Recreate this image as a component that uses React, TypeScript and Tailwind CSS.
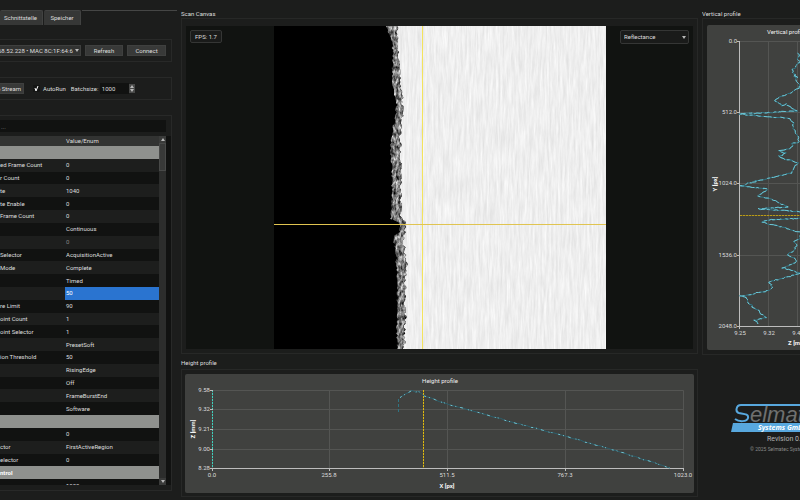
type Point = [number, number];

type Row = {
  label?: string;
  value?: string;
  kind?: "group" | "selected" | "muted";
};

const rows: Row[] = [
  { kind: "group" },
  { label: "ed Frame Count", value: "0" },
  { label: "r Count", value: "0" },
  { label: "te", value: "1040" },
  { label: "te Enable", value: "0" },
  { label: "Frame Count", value: "0" },
  { value: "Continuous" },
  { value: "0", kind: "muted" },
  { label: "Selector", value: "AcquisitionActive" },
  { label: "Mode", value: "Complete" },
  { value: "Timed" },
  { value: "50", kind: "selected" },
  { label: "re Limit", value: "90" },
  { label: "oint Count", value: "1" },
  { label: "oint Selector", value: "1" },
  { value: "PresetSoft" },
  { label: "ion Threshold", value: "50" },
  { value: "RisingEdge" },
  { value: "Off" },
  { value: "FrameBurstEnd" },
  { value: "Software" },
  { kind: "group" },
  { value: "0" },
  { label: "ctor", value: "FirstActiveRegion" },
  { label: "elector", value: "0" },
  { label: "ntrol", kind: "group" },
  { value: "1000" },
];

// small seeded generator, keeps the traces identical between renders
function random(seed: number) {
  let s = seed;
  return () => {
    s = (s * 16807) % 2147483647;
    return s / 2147483647;
  };
}

function roughen(points: Point[], step: number, dx: number, dy: number, seed: number): Point[] {
  const rnd = random(seed);
  const out: Point[] = [];
  for (let i = 0; i < points.length - 1; i++) {
    const [x0, y0] = points[i];
    const [x1, y1] = points[i + 1];
    const n = Math.max(1, Math.round(Math.hypot(x1 - x0, y1 - y0) / step));
    for (let k = 0; k < n; k++) {
      const t = k / n;
      out.push([
        x0 + (x1 - x0) * t + (rnd() - 0.5) * dx,
        y0 + (y1 - y0) * t + (rnd() - 0.5) * dy,
      ]);
    }
  }
  out.push(points[points.length - 1]);
  return out;
}

const toPoints = (points: Point[]) =>
  points.map(([x, y]) => `${x.toFixed(1)},${y.toFixed(1)}`).join(" ");

const edgeLeft: Point[] = [
  [113, 0], [114, 6], [118, 16], [119, 34], [118, 54], [120, 69], [123, 79], [121, 92],
  [118, 109], [117, 124], [118, 154], [117, 193], [123, 196], [127, 200], [126, 206],
  [119, 211], [122, 224], [123, 254], [123, 294], [123, 323],
];

const edgeRight: Point[] = [
  [130, 323], [131, 290], [131, 274], [132, 239], [131, 225], [129, 214], [131, 206],
  [131, 197], [127, 190], [127, 154], [126, 110], [128, 90], [128, 74], [125, 34], [123, 0],
];

const verticalTrace: Point[] = [
  [92, 28], [91, 34], [93, 37], [85, 46], [91, 53], [87, 49], [93, 62], [83, 68],
  [70, 73], [69, 76], [75, 81], [78, 79], [90, 86], [33, 89], [60, 92], [81, 93],
  [87, 98], [85, 102], [89, 107], [92, 113], [91, 117], [86, 119], [83, 124],
  [73, 126], [78, 128], [71, 132], [83, 135], [92, 138], [86, 143], [84, 148],
  [75, 150], [63, 153], [46, 157], [34, 161], [50, 163], [61, 164], [51, 171],
  [65, 174], [73, 178], [80, 182], [51, 184], [100, 187],
];

const verticalTraceLower: Point[] = [
  [100, 193], [61, 195], [53, 197], [71, 201], [78, 203], [93, 207], [93, 213],
  [86, 217], [90, 221], [82, 230], [85, 232], [90, 237], [76, 243], [94, 248],
  [73, 254], [61, 257], [66, 262], [60, 266], [34, 271], [40, 273], [41, 278],
  [48, 283], [59, 293], [48, 295], [51, 299],
];

const heightTrace: Point[] = [
  [215, 24], [222, 19], [227, 17], [234, 18], [239, 22], [262, 30], [331, 49],
  [380, 62], [435, 78], [485, 94],
];

function Triangle({ up = false, className = "" }: { up?: boolean; className?: string }) {
  return (
    <svg viewBox="0 0 4 3" className={`h-[3px] w-1 fill-[#b8b8b8] ${className}`}>
      <path d={up ? "M0 3H4L2 0Z" : "M0 0H4L2 3Z"} />
    </svg>
  );
}

function ScanImage() {
  const left = roughen(edgeLeft, 2, 2, 0, 7);
  const right = roughen(edgeRight, 2, 3, 0, 19);
  return (
    <svg viewBox="0 0 332 323" preserveAspectRatio="none" className="mr-[87px] ml-[88px] h-full min-w-0 flex-1 bg-black">
      <defs>
        <filter id="grain" x="0" y="0" width="100%" height="100%" colorInterpolationFilters="sRGB">
          <feTurbulence type="fractalNoise" baseFrequency="0.45 0.04" numOctaves="4" seed="4" />
          <feColorMatrix values="0.13 0 0 0 0.87  0.13 0 0 0 0.87  0.13 0 0 0 0.87  0 0 0 0 1" />
          <feComposite in2="SourceGraphic" operator="in" />
        </filter>
        <filter id="rough" x="0" y="0" width="100%" height="100%" colorInterpolationFilters="sRGB">
          <feTurbulence type="fractalNoise" baseFrequency="0.4 0.2" numOctaves="3" seed="9" />
          <feColorMatrix values="1.3 0 0 0 -0.16  1.3 0 0 0 -0.16  1.3 0 0 0 -0.16  0 0 0 0 1" />
          <feComposite in2="SourceGraphic" operator="in" />
        </filter>
      </defs>
      <polygon points={`${toPoints(right)} 332,0 332,323`} fill="#f1f1f1" filter="url(#grain)" />
      <polygon points={toPoints([...left, ...right])} fill="#777777" filter="url(#rough)" />
      <path d="M148.500 0V323" stroke="#f3e35c" />
      <path d="M0 198.500H332" stroke="#e0c450" />
    </svg>
  );
}

function HeightChart() {
  const xs = [27, 144, 262, 380, 498];
  const ys = [16, 35, 55, 75, 94];
  const xLabels = ["0.0", "255.8", "511.5", "767.3", "1023.0"];
  const yLabels = ["9.58", "9.32", "9.21", "9.00", "8.28"];
  const trace = toPoints(roughen(heightTrace, 4, 0, 1, 31));
  return (
    <svg viewBox="0 0 509 119" className="w-full rounded-xs bg-[#40413f] text-[6px]">
      <g transform="translate(0.5 0.5)" stroke="#545553">
        {xs.map((x) => <path key={x} d={`M${x} 16V94`} />)}
        {ys.map((y) => <path key={y} d={`M27 ${y}H498`} />)}
      </g>
      <path d="M27 94.500H499" stroke="#bdbdbd" />
      <path d="M27.500 16V94" stroke="#3fd0bd" strokeDasharray="2 1" />
      <path d="M238.500 16V94" stroke="#6e611c" />
      <path d="M238.500 16V94" stroke="#dcb814" strokeDasharray="2 1" />
      <g fill="#dcdcdc">
        <text x="255" y="9" textAnchor="middle" fill="#f0f0f0">Height profile</text>
        {xs.map((x, i) => (
          <g key={x}>
            <path d={`M${x}.5 94v3`} stroke="#bdbdbd" />
            <text x={x} y="103" textAnchor="middle">{xLabels[i]}</text>
          </g>
        ))}
        {ys.map((y, i) => (
          <g key={y}>
            <path d={`M25 ${y}.5h3`} stroke="#bdbdbd" />
            <text x="25" y={y + 2} textAnchor="end">{yLabels[i]}</text>
          </g>
        ))}
        <text x="262" y="114" textAnchor="middle" fontWeight="700" fill="#f4f4f4">X [px]</text>
        <text transform="translate(10 55) rotate(-90)" textAnchor="middle" fontWeight="700" fill="#f4f4f4">Z [mm]</text>
      </g>
      <g fill="none">
        <path d="M213.500 25V40" stroke="#2f7482" strokeDasharray="3 2" />
        <polyline points={trace} stroke="#2c5f6c" />
        <polyline points={trace} stroke="#74c3cf" strokeDasharray="2 3 1 4 3 5 1 2 1 6" />
      </g>
    </svg>
  );
}

function VerticalChart() {
  const ys = [16, 87, 158, 230, 301];
  const yLabels = ["0.0", "512.0", "1024.0", "1536.0", "2048.0"];
  const traces = [
    toPoints(roughen(verticalTrace, 2, 3, 1, 5)),
    toPoints(roughen(verticalTraceLower, 2, 3, 1, 11)),
  ];
  return (
    <svg viewBox="0 0 180 325" className="w-[180px] shrink-0 rounded-xs bg-[#40413f] text-[6px]">
      <g transform="translate(0.5 0.5)" stroke="#545553">
        {[61, 90, 119, 148].map((x) => <path key={x} d={`M${x} 16V301`} />)}
        {ys.map((y) => <path key={y} d={`M32 ${y}H180`} />)}
      </g>
      <path d="M32.500 16V304M32 301.500H180" stroke="#bdbdbd" fill="none" />
      <path d="M33 190.500H180" stroke="#6e611c" />
      <path d="M33 190.500H180" stroke="#b89a1c" strokeDasharray="2 1" />
      <g fill="#dcdcdc">
        <text x="60" y="9" fill="#f0f0f0">Vertical profile</text>
        {ys.map((y, i) => (
          <g key={y}>
            <path d={`M30 ${y}.5h3`} stroke="#bdbdbd" />
            <text x="30" y={y + 2} textAnchor="end">{yLabels[i]}</text>
          </g>
        ))}
        <text x="33" y="310" textAnchor="middle">9.25</text>
        <text x="62" y="310" textAnchor="middle">9.32</text>
        <text x="91" y="310" textAnchor="middle">9.40</text>
        <text x="81" y="320" fontWeight="700" fill="#f4f4f4">Z [mm]</text>
        <text transform="translate(10 159) rotate(-90)" textAnchor="middle" fontWeight="700" fill="#f4f4f4">Y [px]</text>
      </g>
      {traces.map((trace) => (
        <g key={trace} fill="none">
          <polyline points={trace} stroke="#2f7788" />
          <polyline points={trace} stroke="#6fc6d4" strokeDasharray="5 3 8 2 3 4" />
        </g>
      ))}
    </svg>
  );
}

function Logo() {
  return (
    <svg viewBox="0 0 140 30" className="h-[30px] w-[140px] shrink-0" fontStyle="italic">
      <path
        d="M140 2H10C5 2 4 9 8 10C13 11 18 11 17 15C16 19 8 19 4 16"
        fill="none"
        stroke="#58a8de"
        strokeWidth="2"
      />
      <text x="19" y="19" fontSize="22" fontFamily="Liberation Sans, sans-serif" fill="#6f706f">elmatec</text>
      <path d="M2 20H140V29H0Z" fill="#58a8de" />
      <text x="27" y="27" fontSize="7" fontWeight="700" fontFamily="Noto Sans, sans-serif" fill="#ffffff">Systems GmbH</text>
    </svg>
  );
}

function ParameterTable() {
  return (
    <div className="mt-1 flex h-[349px] overflow-hidden bg-[#111211]">
      <table className="h-[356px] w-[159px] table-fixed border-collapse text-left leading-[8px]">
        <thead>
          <tr className="h-[10px] bg-[#323332]">
            <th className="w-[65px] p-0" aria-label="Feature" />
            <th className="p-0 pl-px font-normal">Value/Enum</th>
          </tr>
        </thead>
        <tbody>
          {rows.map((row, i) => {
            const group = row.kind === "group";
            const stripe = i % 2 ? "h-[12px] bg-[#1d1e1d]" : "h-[12px] bg-[#111211]";
            return (
              <tr key={i} className={group ? "h-[12px] bg-[#8f918e] font-bold text-white" : stripe}>
                <td className="p-0 whitespace-nowrap">{row.label}</td>
                <td
                  className={
                    row.kind === "selected"
                      ? "bg-[#2a74d0] p-0 pl-px text-white"
                      : row.kind === "muted"
                        ? "p-0 pl-px text-[#858685]"
                        : "p-0 pl-px"
                  }
                >
                  {row.value}
                </td>
              </tr>
            );
          })}
        </tbody>
      </table>
      <div className="flex w-[7px] flex-col items-center bg-[#2c2d2c]">
        <button aria-label="Scroll up" className="flex h-[7px] w-full items-center justify-center bg-[#3a3b3a]">
          <Triangle up />
        </button>
        <div className="h-[28px] w-full border border-[#484948] bg-[#383938]" />
        <button aria-label="Scroll down" className="mt-auto flex h-[7px] w-full items-center justify-center bg-[#3a3b3a]">
          <Triangle />
        </button>
      </div>
    </div>
  );
}

function Sidebar() {
  const button = "h-[11px] border border-[#3f403f] bg-[#383938]";
  return (
    <aside className="flex w-[177px] shrink-0 flex-col pt-[10px]">
      <nav className="flex h-[15px] gap-px">
        <button className="w-[43px] rounded-t-xs border-t border-r border-[#414241] bg-[#363736] pr-px">Schnittstelle</button>
        <button className="w-[37px] rounded-t-xs border-t border-r border-[#414241] bg-[#363736]">Speicher</button>
        <div className="flex-1 border-t border-[#454645]" />
      </nav>

      <section className="mt-[14px] mr-[5px] flex h-[23px] items-center gap-1 border border-l-0 border-[#282928]">
        <label className="relative flex w-[81px]">
          <select aria-label="Device" className="h-[11px] w-full appearance-none border border-l-0 border-[#3f403f] bg-[#323332] -indent-[2px]">
            <option>68.52.228 • MAC 8C:1F:64:6</option>
          </select>
          <Triangle className="absolute top-1 right-[2px]" />
        </label>
        <button className={`${button} w-[38px]`}>Refresh</button>
        <button className={`${button} w-[39px]`}>Connect</button>
      </section>

      <section className="mt-[15px] mr-[5px] flex h-[23px] items-center border border-l-0 border-[#282928]">
        <button className={`${button} flex w-[24px] items-center justify-end overflow-hidden border-l-0 pr-[2px] whitespace-nowrap`}>
          o Stream
        </button>
        <label className="ml-[9px] flex items-center gap-[3px]">
          <span className="relative flex">
            <input type="checkbox" defaultChecked className="size-[7px] appearance-none bg-[#141514]" />
            <svg viewBox="0 0 7 7" className="pointer-events-none absolute inset-0 size-[7px] fill-none stroke-white">
              <path d="M2 3L3 6L5 1" />
            </svg>
          </span>
          AutoRun
        </label>
        <label htmlFor="batch" className="ml-[5px] w-[29px]">Batchsize:</label>
        <input id="batch" defaultValue="1000" className="h-[11px] w-[29px] bg-[#111211] pl-[2px]" />
        <div className="flex h-[9px] w-[6px] flex-col items-center justify-center gap-px bg-[#484948]">
          <Triangle up />
          <Triangle />
        </div>
      </section>

      <section className="mt-[15px] mr-[5px] h-[376px] border border-l-0 border-[#282928] pt-1">
        <input aria-label="Filter" placeholder="..." className="block h-[12px] w-[166px] bg-[#111211] pl-px placeholder:text-[#9a9b9a]" />
        <ParameterTable />
      </section>
    </aside>
  );
}

export default function App() {
  return (
    <div className="flex h-screen overflow-hidden bg-[#1c1d1c] font-[Roboto,'Open_Sans',sans-serif] text-[6px] leading-[8px] text-[#dedede]">
      <Sidebar />

      <main className="ml-1 flex min-w-0 flex-1 flex-col pt-[10px]">
        <h2>Scan Canvas</h2>
        <section className="border border-[#272827] px-1 pt-[7px] pb-1">
          <div className="relative flex h-[323px] bg-[#111311]">
            <ScanImage />
            <div className="absolute top-1 left-1 flex h-[13px] w-[32px] items-center justify-center rounded-xs border border-[#353635] bg-[#1a1b1a]">
              FPS: 1.7
            </div>
            <label className="absolute top-1 right-1 flex w-[69px]">
              <select aria-label="Channel" className="h-[14px] w-full appearance-none rounded-xs border border-[#353635] bg-[#1a1b1a] pl-[3px]">
                <option>Reflectance</option>
              </select>
              <Triangle className="absolute top-[6px] right-[3px]" />
            </label>
          </div>
        </section>

        <h2 className="mt-[5px]">Height profile</h2>
        <section className="mt-[2px] border border-[#272827] px-[3px] pt-1 pb-[3px]">
          <HeightChart />
        </section>
      </main>

      <aside className="ml-1 flex w-[98px] shrink-0 flex-col overflow-hidden pt-[10px]">
        <h2>Vertical profile</h2>
        <section className="flex border border-r-0 border-[#272827] pt-[6px] pb-1 pl-1">
          <VerticalChart />
        </section>
        <footer className="mt-[48px] flex flex-col pl-[29px] whitespace-nowrap">
          <Logo />
          <p className="pl-[36px] text-[7px] leading-[12px] text-[#b4b5b4]">Revision 0.</p>
          <p className="pl-[19px] text-[5px] text-[#8a8b8a]">© 2025 Selmatec Systems GmbH</p>
        </footer>
      </aside>
    </div>
  );
}
